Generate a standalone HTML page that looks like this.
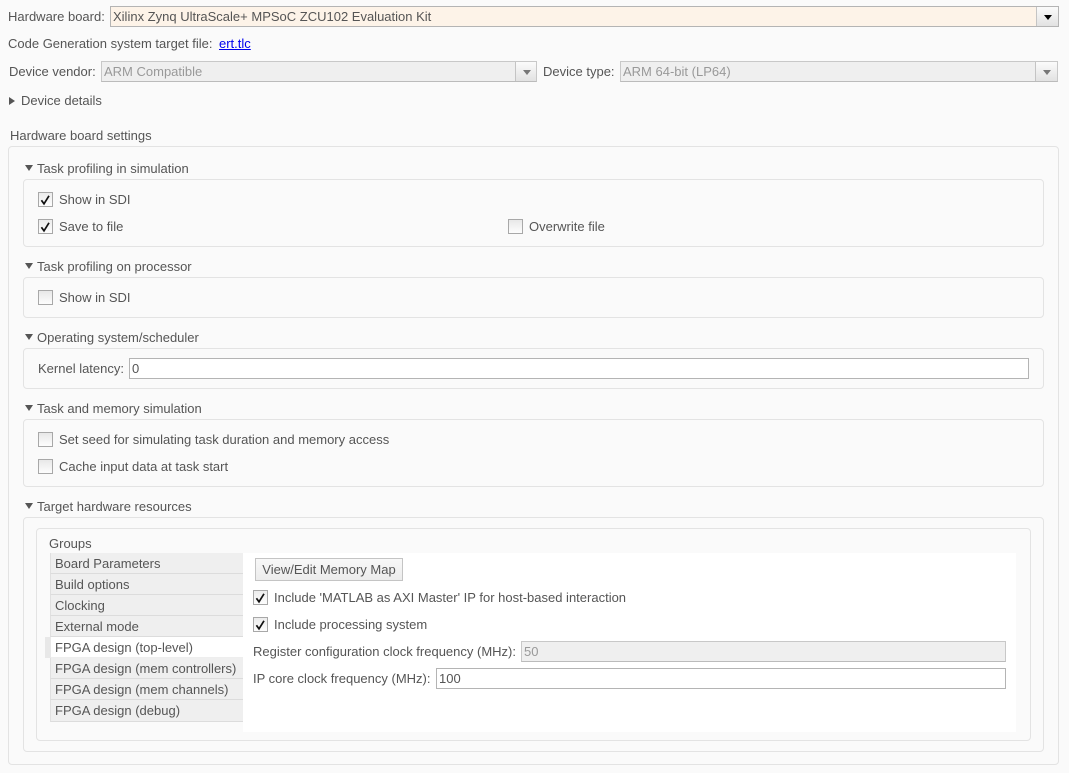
<!DOCTYPE html>
<html><head><meta charset="utf-8"><style>
html,body{margin:0;padding:0}
body{width:1069px;height:773px;background:#fafafa;position:relative;overflow:hidden;font-family:"Liberation Sans",Arial,sans-serif;font-size:13px;color:#555}
.a{position:absolute;box-sizing:border-box}
.t{position:absolute;white-space:nowrap;line-height:16px;margin-top:1px}
.p{position:absolute;box-sizing:border-box;border:1px solid #e3e3e3;border-radius:4px}
.i{position:absolute;box-sizing:border-box;border:1px solid #b4b4b4;height:21px;line-height:19px;padding-left:2px;white-space:nowrap;background:#fff}
.d{background:#efefef;border-color:#c8c8c8;border-bottom-color:#bbb;color:#999}
.btn{position:absolute;box-sizing:border-box;border-left:1px solid #c4c4c4;background:linear-gradient(#fbfbfb,#e2e2e2)}
.tri{position:absolute;width:0;height:0;border-left:4px solid transparent;border-right:4px solid transparent;border-top:5px solid #000}
.c{position:absolute;box-sizing:border-box;width:15px;height:15px;border:1px solid #a8a8a8;background:linear-gradient(#ececec,#fdfdfd)}
.c svg{position:absolute;left:0;top:0}
.u{position:absolute;box-sizing:border-box;width:15px;height:15px;border:1px solid #a8a8a8;background:linear-gradient(#e8e8e8,#fdfdfd)}
.h{position:absolute;width:0;height:0;border-left:4px solid transparent;border-right:4px solid transparent;border-top:6px solid #555;left:25px}
.r{position:absolute;box-sizing:border-box;left:50px;width:193px;height:21px;background:#efefef;border-bottom:1px solid #dcdcdc;border-left:1px solid #e0e0e0;padding-left:4px;line-height:22px;white-space:nowrap}
</style></head><body>

<div class="t" style="left:8px;top:8px">Hardware board:</div>
<div class="i" style="left:110px;top:6px;width:949px;background:#fdf3e8;line-height:19px">Xilinx Zynq UltraScale+ MPSoC ZCU102 Evaluation Kit</div>
<div class="btn" style="left:1036px;top:7px;width:22px;height:19px"><div class="tri" style="left:7px;top:8px"></div></div>

<div class="t" style="left:8px;top:35px">Code Generation system target file:</div>
<div class="t" style="left:219px;top:35px;color:#00e;text-decoration:underline">ert.tlc</div>

<div class="t" style="left:9px;top:63px">Device vendor:</div>
<div class="i d" style="left:101px;top:61px;width:436px;padding-left:2px">ARM Compatible</div>
<div class="btn" style="left:515px;top:62px;width:21px;height:19px"><div class="tri" style="left:7px;top:8px;border-top-color:#777"></div></div>

<div class="t" style="left:543px;top:63px">Device type:</div>
<div class="i d" style="left:620px;top:61px;width:438px">ARM 64-bit (LP64)</div>
<div class="btn" style="left:1035px;top:62px;width:22px;height:19px"><div class="tri" style="left:7px;top:8px;border-top-color:#777"></div></div>

<div class="a" style="left:9px;top:97px;width:0;height:0;border-top:4px solid transparent;border-bottom:4px solid transparent;border-left:6px solid #555"></div>
<div class="t" style="left:21px;top:92px">Device details</div>

<div class="t" style="left:10px;top:127px">Hardware board settings</div>
<div class="p" style="left:8px;top:146px;width:1051px;height:619px"></div>

<div class="h" style="top:165px"></div>
<div class="t" style="left:37px;top:160px">Task profiling in simulation</div>
<div class="p" style="left:23px;top:179px;width:1021px;height:68px"></div>
<div class="c" style="left:38px;top:192px"><svg width="13" height="13" viewBox="0 0 13 13"><path d="M2.4 7.2 L5 10.8 L10 2.8" fill="none" stroke="#111" stroke-width="1.7"/></svg></div>
<div class="t" style="left:59px;top:191px">Show in SDI</div>
<div class="c" style="left:38px;top:219px"><svg width="13" height="13" viewBox="0 0 13 13"><path d="M2.4 7.2 L5 10.8 L10 2.8" fill="none" stroke="#111" stroke-width="1.7"/></svg></div>
<div class="t" style="left:59px;top:218px">Save to file</div>
<div class="u" style="left:508px;top:219px"></div>
<div class="t" style="left:529px;top:218px">Overwrite file</div>

<div class="h" style="top:263px"></div>
<div class="t" style="left:37px;top:258px">Task profiling on processor</div>
<div class="p" style="left:23px;top:277px;width:1021px;height:41px"></div>
<div class="u" style="left:38px;top:290px"></div>
<div class="t" style="left:59px;top:289px">Show in SDI</div>

<div class="h" style="top:334px"></div>
<div class="t" style="left:37px;top:329px">Operating system/scheduler</div>
<div class="p" style="left:23px;top:348px;width:1021px;height:41px"></div>
<div class="t" style="left:38px;top:360px">Kernel latency:</div>
<div class="i" style="left:129px;top:358px;width:900px">0</div>

<div class="h" style="top:405px"></div>
<div class="t" style="left:37px;top:400px">Task and memory simulation</div>
<div class="p" style="left:23px;top:419px;width:1021px;height:68px"></div>
<div class="u" style="left:38px;top:432px"></div>
<div class="t" style="left:59px;top:431px">Set seed for simulating task duration and memory access</div>
<div class="u" style="left:38px;top:459px"></div>
<div class="t" style="left:59px;top:458px">Cache input data at task start</div>

<div class="h" style="top:503px"></div>
<div class="t" style="left:37px;top:498px">Target hardware resources</div>
<div class="p" style="left:23px;top:517px;width:1021px;height:235px"></div>
<div class="p" style="left:36px;top:528px;width:995px;height:213px"></div>
<div class="t" style="left:49px;top:535px">Groups</div>

<div class="a" style="left:243px;top:553px;width:773px;height:179px;background:#fff"></div>
<div class="r" style="top:553px">Board Parameters</div>
<div class="r" style="top:574px">Build options</div>
<div class="r" style="top:595px">Clocking</div>
<div class="r" style="top:616px">External mode</div>
<div class="a" style="left:45px;top:637px;width:6px;height:21px;background:#e8e8e8"></div>
<div class="r" style="top:637px;left:51px;width:192px;background:#fff;border-left:0;padding-left:4px;border-bottom:1px solid #eee">FPGA design (top-level)</div>
<div class="r" style="top:658px">FPGA design (mem controllers)</div>
<div class="r" style="top:679px">FPGA design (mem channels)</div>
<div class="r" style="top:700px;height:22px">FPGA design (debug)</div>

<div class="a" style="left:255px;top:558px;width:148px;height:23px;border:1px solid #c4c4c4;background:linear-gradient(#f8f8f8,#ececec);text-align:center;line-height:21px;white-space:nowrap">View/Edit Memory Map</div>

<div class="c" style="left:253px;top:590px"><svg width="13" height="13" viewBox="0 0 13 13"><path d="M2.4 7.2 L5 10.8 L10 2.8" fill="none" stroke="#111" stroke-width="1.7"/></svg></div>
<div class="t" style="left:274px;top:589px">Include 'MATLAB as AXI Master' IP for host-based interaction</div>
<div class="c" style="left:253px;top:617px"><svg width="13" height="13" viewBox="0 0 13 13"><path d="M2.4 7.2 L5 10.8 L10 2.8" fill="none" stroke="#111" stroke-width="1.7"/></svg></div>
<div class="t" style="left:274px;top:616px">Include processing system</div>
<div class="t" style="left:253px;top:643px">Register configuration clock frequency (MHz):</div>
<div class="i d" style="left:521px;top:641px;width:485px">50</div>
<div class="t" style="left:253px;top:670px">IP core clock frequency (MHz):</div>
<div class="i" style="left:436px;top:668px;width:570px">100</div>

</body></html>
